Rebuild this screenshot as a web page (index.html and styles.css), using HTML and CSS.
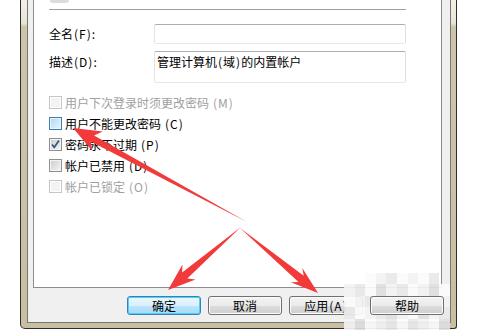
FILE: index.html
```html
<!DOCTYPE html>
<html lang="zh-CN">
<head>
    <meta charset="UTF-8">
    <title>Administrator 属性</title>
    <link rel="stylesheet" href="styles.css">
</head>
<body>
    <div class="window">
        <div class="client">
            <div class="panel">
                <div class="icon-stub"></div>
                <div class="rule"></div>

                <div class="field">
                    <span class="field-label">全名<span class="hk">(F)</span>:</span>
                    <div class="textbox"></div>
                </div>
                <div class="field field-tall">
                    <span class="field-label">描述<span class="hk">(D)</span>:</span>
                    <div class="textbox textbox-tall">管理计算机<span class="hk">(域)</span>的内置帐户</div>
                </div>

                <div class="options">
                    <div class="option disabled"><span class="cb"></span>用户下次登录时须更改密码<span class="hk">(M)</span></div>
                    <div class="option"><span class="cb hot"></span>用户不能更改密码<span class="hk">(C)</span></div>
                    <div class="option">
                        <span class="cb">
                            <svg width="11" height="11" viewBox="0 0 11 11"><path d="M2 5.5 L4.3 8.3 L9 1.5" fill="none" stroke="#3e5487" stroke-width="1.8"/></svg>
                        </span>密码永不过期<span class="hk">(P)</span>
                    </div>
                    <div class="option"><span class="cb"></span>帐户已禁用<span class="hk">(D)</span></div>
                    <div class="option disabled"><span class="cb"></span>帐户已锁定<span class="hk">(O)</span></div>
                </div>
            </div>

            <div class="buttons">
                <button class="btn btn-default">确定</button>
                <button class="btn">取消</button>
                <button class="btn">应用<span class="hk">(A)</span></button>
                <button class="btn btn-help">帮助</button>
            </div>
        </div>
    </div>

    <!-- pixelated patch over the lower right corner -->
    <div class="mosaic">
        <span class="m0"></span><span class="m0"></span><span class="m2"></span><span class="m1"></span><span class="m3"></span><span class="m2"></span><span class="m1"></span><span class="m2"></span><span class="m3"></span><span class="m0"></span>
        <span class="m1"></span><span class="m3"></span><span class="m2"></span><span class="m4"></span><span class="m1"></span><span class="m3"></span><span class="m2"></span><span class="m1"></span><span class="m4"></span><span class="m2"></span>
        <span class="m2"></span><span class="m1"></span><span class="m3"></span><span class="m1"></span><span class="m2"></span><span class="m4"></span><span class="m1"></span><span class="m3"></span><span class="m2"></span><span class="m1"></span>
        <span class="m3"></span><span class="m2"></span><span class="m1"></span><span class="m3"></span><span class="m4"></span><span class="m1"></span><span class="m2"></span><span class="m4"></span><span class="m1"></span><span class="m3"></span>
        <span class="m1"></span><span class="m4"></span><span class="m2"></span><span class="m1"></span><span class="m3"></span><span class="m2"></span><span class="m3"></span><span class="m1"></span><span class="m2"></span><span class="m4"></span>
    </div>

    <svg class="arrows" width="500" height="330" viewBox="0 0 500 330">
        <polygon points="73,128 102.8,131.6 94.1,135.4 247,222 90.7,141.6 92.4,151" />
        <polygon points="168,290 182.5,264.5 182.1,272.6 241,227 187.3,278.6 195.5,279.5" />
        <polygon points="318,293 290.8,282.2 298.5,282 240,228 303.7,275.8 302.3,268" />
    </svg>
</body>
</html>
```

FILE: styles.css
```css
body {
    margin: 0;
    width: 500px;
    height: 330px;
    overflow: hidden;
    background: #fff;
    font-family: "Noto Sans CJK SC", "Liberation Sans", sans-serif;
    font-size: 12px;
    color: #000;
    position: relative;
}

/* hotkey letters in brackets are drawn wider in the original font */
.hk {
    letter-spacing: 1px;
    margin-left: 1px;
}

.window {
    margin-left: 20px;
    width: 437px;
    height: 329px;
    box-sizing: border-box;
    border: 1px solid #2e2e2e;
    border-top: 0;
    border-radius: 0 0 3px 5px;
    padding: 0 5px 5px 6px;
    background: linear-gradient(to bottom, #f1efe8 0, #e8e5d8 23px, #cdc5aa 27px, #c8bfa3 100%);
}

.client {
    width: 424px;
    height: 323px;
    box-sizing: border-box;
    border: 1px solid #77766f;
    border-top: 0;
    background: #f0f0f0;
    padding: 0 8px 0 5px;
}

.panel {
    height: 288px;
    box-sizing: border-box;
    border: 1px solid #898c95;
    border-top: 0;
    background: #fff;
    padding-left: 15px;
}

.icon-stub {
    margin-left: 1px;
    width: 19px;
    height: 3px;
    border-radius: 0 0 3px 3px;
    background: #dcdcdc;
}

.rule {
    margin-top: 6px;
    width: 357px;
    height: 1px;
    background: #a0a0a0;
}

.field {
    display: flex;
    align-items: center;
    margin-top: 14px;
}
.field-tall {
    align-items: flex-start;
    margin-top: 7px;
}
.field-label {
    width: 105px;
    line-height: 20px;
}
.field-tall .field-label {
    padding-top: 1px;
}

.textbox {
    width: 252px;
    height: 20px;
    box-sizing: border-box;
    border: 1px solid;
    border-color: #abadb3 #dbdfe6 #e3e9ef #e2e3ea;
    border-radius: 2px;
    background: #fff;
    padding-left: 2px;
    line-height: 18px;
}
.textbox-tall {
    height: 32px;
    padding-top: 1px;
}

.options {
    margin-top: 9px;
}
.option {
    display: flex;
    align-items: center;
    gap: 3px;
    height: 21px;
}
.option.disabled {
    color: #a0a0a0;
}

.cb {
    width: 13px;
    height: 13px;
    box-sizing: border-box;
    border: 1px solid #8e8f8f;
    box-shadow: inset 0 0 0 1px #f4f4f4;
    background: linear-gradient(135deg, #c9ccd2, #f5f5f5);
    display: flex;
    align-items: center;
    justify-content: center;
}
.disabled .cb {
    border-color: #c5c5c5;
    box-shadow: inset 0 0 0 1px #fff;
    background: #f3f3f3;
}
.cb.hot {
    border-color: #3c7fb1;
    box-shadow: inset 0 0 0 1px #e6f4fc;
    background: linear-gradient(135deg, #aed8f2, #e8f6fd);
}

.buttons {
    display: flex;
    justify-content: flex-end;
    gap: 7px;
    margin-top: 8px;
    margin-right: -2px;
}
.btn {
    width: 74px;
    height: 19px;
    padding: 0;
    border: 1px solid #707070;
    border-radius: 3px;
    box-shadow: inset 0 0 0 1px #fbfbfb;
    background: linear-gradient(to bottom, #f3f3f3 0, #ebebeb 50%, #dddddd 50%, #cfcfcf 100%);
    font-family: "Noto Sans CJK SC", "Liberation Sans", sans-serif;
    font-size: 12px;
    line-height: 16px;
    color: #000;
}
.btn-default {
    border-color: #3c7fb1;
    box-shadow: inset 0 0 0 1px #48d3fb;
    background: linear-gradient(to bottom, #eaf6fd 0, #d9f0fc 50%, #bee6fd 50%, #a7d9f5 100%);
}
.btn-help {
    position: relative;
    z-index: 2;
}

.mosaic {
    position: absolute;
    left: 344px;
    top: 273px;
    width: 106px;
    height: 57px;
    display: grid;
    grid-template-columns: repeat(10, 1fr);
    grid-template-rows: repeat(5, 1fr);
    z-index: 1;
}
.mosaic span {
    opacity: 0.92;
}
.m0 { background: transparent; }
.m1 { background: #f2f2f2; }
.m2 { background: #fbfbfb; }
.m3 { background: #e8e8e8; }
.m4 { background: #dedede; }

.arrows {
    position: absolute;
    left: 0;
    top: 0;
    z-index: 3;
    fill: #f23a3a;
}
```
